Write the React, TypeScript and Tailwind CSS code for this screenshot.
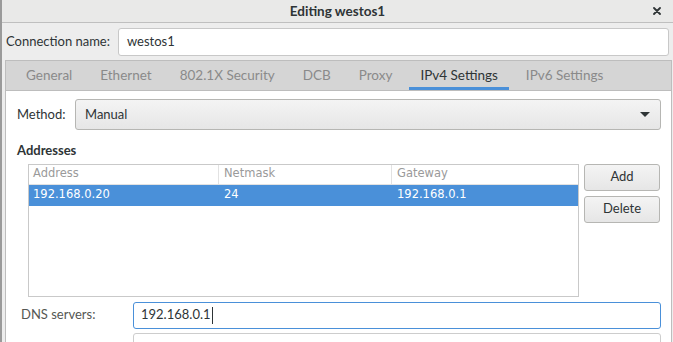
import React from "react";

const ui = { fontFamily: "Lato, 'Open Sans', sans-serif" };
const mono = { fontFamily: "'DejaVu Sans', sans-serif" };

export default function App() {
  const tabs = ["General", "Ethernet", "802.1X Security", "DCB", "Proxy", "IPv4 Settings", "IPv6 Settings"];
  return (
    <div className="w-[673px] h-[342px] overflow-hidden bg-[#ededed] border-l-2 border-[#9a9a9a] flex flex-col text-[13px] text-[#2e3436]" style={ui}>
      {/* title bar */}
      <div className="h-[23px] shrink-0 flex items-center justify-center relative bg-[#e9e9e8] border-b border-[#bfbfbf]">
        <span className="font-bold text-[13.5px] text-[#2e3436]">Editing westos1</span>
        <svg className="absolute right-[12px] top-[7px]" width="8" height="8" viewBox="0 0 8 8">
          <path d="M1 1 L7 7 M7 1 L1 7" stroke="#2e3436" strokeWidth="1.8" strokeLinecap="round" />
        </svg>
      </div>
      {/* connection name */}
      <div className="h-[37px] shrink-0 flex items-center pl-[4px] pr-[4px]">
        <span className="w-[112px] text-[#2e3436]">Connection name:</span>
        <div className="flex-1 h-[28px] bg-white border border-[#c8c8c8] rounded-[3px] flex items-center pl-[8px]">westos1</div>
      </div>
      {/* notebook */}
      <div className="flex-1 mx-[3px] mr-[1px] border border-[#bdbdbd] border-b-0 flex flex-col bg-white">
        <div className="h-[30px] shrink-0 bg-[#d5d5d5] border-b border-[#bdbdbd] flex items-stretch pl-[6px] text-[13.5px]">
          {tabs.map((t) => (
            <div key={t} className={"px-[14px] flex items-center relative " + (t === "IPv4 Settings" ? "text-[#2e3436]" : "text-[#8a8a8a]")}>
              {t}
              {t === "IPv4 Settings" && <div className="absolute left-[3px] right-[3px] bottom-0 h-[3px] bg-[#4a90d9]" />}
            </div>
          ))}
        </div>
        <div className="flex-1 flex flex-col pl-[11px] pr-[10px]">
          <div className="flex items-center mt-[8px] h-[31px]">
            <span className="w-[58px]">Method:</span>
            <div className="flex-1 h-[31px] rounded-[3px] border border-[#b6b6b3] bg-gradient-to-b from-[#f4f4f4] to-[#e6e6e6] flex items-center pl-[9px] pr-[10px] justify-between">
              <span>Manual</span>
              <svg width="10" height="6" viewBox="0 0 10 6"><path d="M0 0 L10 0 L5 5 Z" fill="#2e3436" /></svg>
            </div>
          </div>
          <div className="font-bold mt-[11px]">Addresses</div>
          <div className="flex mt-[3px] pl-[11px]">
            <div className="w-[551px] h-[133px] border border-[#c9c9c9] bg-white flex flex-col text-[11.5px]" style={mono}>
              <div className="h-[20px] flex text-[#9a9a9a] border-b border-[#e2e2e2]">
                <div className="w-[190px] pl-[4px] flex items-center border-r border-[#e2e2e2]">Address</div>
                <div className="w-[173px] pl-[5px] flex items-center border-r border-[#e2e2e2]">Netmask</div>
                <div className="flex-1 pl-[5px] flex items-center">Gateway</div>
              </div>
              <div className="h-[21px] flex bg-[#4a90d9] text-white">
                <div className="w-[190px] pl-[4px] flex items-center">192.168.0.20</div>
                <div className="w-[173px] pl-[5px] flex items-center">24</div>
                <div className="flex-1 pl-[5px] flex items-center">192.168.0.1</div>
              </div>
            </div>
            <div className="ml-[5px] flex flex-col gap-[5px]">
              <div className="w-[76px] h-[27px] rounded-[3px] border border-[#b6b6b3] bg-gradient-to-b from-[#f4f4f4] to-[#e6e6e6] flex items-center justify-center">Add</div>
              <div className="w-[76px] h-[27px] rounded-[3px] border border-[#b6b6b3] bg-gradient-to-b from-[#f4f4f4] to-[#e6e6e6] flex items-center justify-center">Delete</div>
            </div>
          </div>
          <div className="flex items-center mt-[5px] pl-[4px]">
            <span className="w-[112px] text-[#555753]">DNS servers:</span>
            <div className="flex-1 h-[27px] bg-white border border-[#4a90d9] rounded-[3px] flex items-center pl-[7px]">
              192.168.0.1<span className="inline-block w-[1px] h-[17px] bg-[#2e3436] ml-[1px]" />
            </div>
          </div>
          <div className="flex mt-[4px] pl-[116px]">
            <div className="flex-1 h-[27px] bg-white border border-[#cdcdcd] rounded-[3px]" />
          </div>
        </div>
      </div>
    </div>
  );
}
